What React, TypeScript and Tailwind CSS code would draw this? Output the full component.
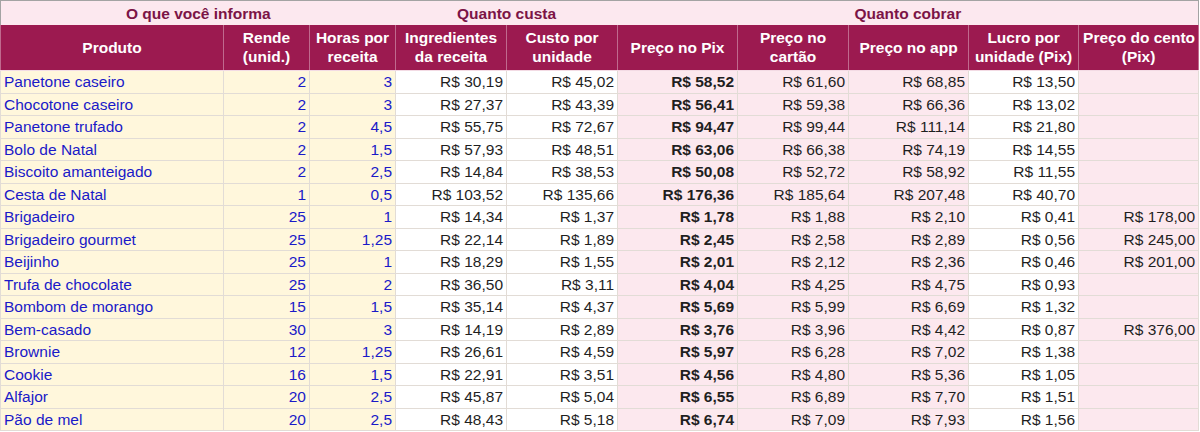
const rows: [string, string, string, string, string, string, string, string, string, string][] = [
  ["Panetone caseiro", "2", "3", "30,19", "45,02", "58,52", "61,60", "68,85", "13,50", ""],
  ["Chocotone caseiro", "2", "3", "27,37", "43,39", "56,41", "59,38", "66,36", "13,02", ""],
  ["Panetone trufado", "2", "4,5", "55,75", "72,67", "94,47", "99,44", "111,14", "21,80", ""],
  ["Bolo de Natal", "2", "1,5", "57,93", "48,51", "63,06", "66,38", "74,19", "14,55", ""],
  ["Biscoito amanteigado", "2", "2,5", "14,84", "38,53", "50,08", "52,72", "58,92", "11,55", ""],
  ["Cesta de Natal", "1", "0,5", "103,52", "135,66", "176,36", "185,64", "207,48", "40,70", ""],
  ["Brigadeiro", "25", "1", "14,34", "1,37", "1,78", "1,88", "2,10", "0,41", "178,00"],
  ["Brigadeiro gourmet", "25", "1,25", "22,14", "1,89", "2,45", "2,58", "2,89", "0,56", "245,00"],
  ["Beijinho", "25", "1", "18,29", "1,55", "2,01", "2,12", "2,36", "0,46", "201,00"],
  ["Trufa de chocolate", "25", "2", "36,50", "3,11", "4,04", "4,25", "4,75", "0,93", ""],
  ["Bombom de morango", "15", "1,5", "35,14", "4,37", "5,69", "5,99", "6,69", "1,32", ""],
  ["Bem-casado", "30", "3", "14,19", "2,89", "3,76", "3,96", "4,42", "0,87", "376,00"],
  ["Brownie", "12", "1,25", "26,61", "4,59", "5,97", "6,28", "7,02", "1,38", ""],
  ["Cookie", "16", "1,5", "22,91", "3,51", "4,56", "4,80", "5,36", "1,05", ""],
  ["Alfajor", "20", "2,5", "45,87", "5,04", "6,55", "6,89", "7,70", "1,51", ""],
  ["Pão de mel", "20", "2,5", "48,43", "5,18", "6,74", "7,09", "7,93", "1,56", ""],
]

const widths = [223, 86, 86, 111, 111, 120, 111, 120, 110, 120]

const headers = [
  ["Produto"],
  ["Rende", "(unid.)"],
  ["Horas por", "receita"],
  ["Ingredientes", "da receita"],
  ["Custo por", "unidade"],
  ["Preço no Pix"],
  ["Preço no", "cartão"],
  ["Preço no app"],
  ["Lucro por", "unidade (Pix)"],
  ["Preço do cento", "(Pix)"],
]

// background per column: input cols yellow, cost cols white, price cols pink
const cellBg = [
  "bg-[#fff7dc]",
  "bg-[#fff7dc]",
  "bg-[#fff7dc]",
  "bg-white",
  "bg-white",
  "bg-[#fce8ee]",
  "bg-[#fce8ee]",
  "bg-[#fce8ee]",
  "bg-white",
  "bg-[#fce8ee]",
]

export default function App() {
  return (
    <div className="w-[1200px] h-[432px] bg-white font-['Liberation_Sans',Arial,sans-serif] text-[15.5px]">
      <table className="table-fixed border-collapse w-[1199px] border border-[#a3a3a3]">
        <colgroup>
          {widths.map((w, i) => (
            <col key={i} style={{ width: w }} />
          ))}
        </colgroup>
        <thead>
          <tr className="h-[24px] bg-[#fce8ef] text-[#7b1446] font-bold">
            <th colSpan={3} className="text-center leading-none pt-px">
              O que você informa
            </th>
            <th colSpan={2} className="text-center leading-none pt-px">
              Quanto custa
            </th>
            <th colSpan={5} className="text-center leading-none pt-px">
              Quanto cobrar
            </th>
          </tr>
          <tr className="h-[46px] bg-[#9c1a50] text-white font-bold">
            {headers.map((lines, i) => (
              <th
                key={i}
                className="text-center leading-[19px] px-1 border-x border-[#c06a8e] border-b border-b-[#f3dbe4]"
              >
                {lines.map((l, j) => (
                  <div key={j} className="whitespace-nowrap">
                    {l}
                  </div>
                ))}
              </th>
            ))}
          </tr>
        </thead>
        <tbody>
          {rows.map((r, ri) => (
            <tr key={ri} className="h-[22.5px]">
              {r.map((v, ci) => {
                const base = `${cellBg[ci]} border border-[#e2dcd6] leading-none px-[3px] whitespace-nowrap`
                if (ci === 0)
                  return (
                    <td key={ci} className={`${base} text-left text-[#1a1ac8]`}>
                      {v}
                    </td>
                  )
                if (ci < 3)
                  return (
                    <td key={ci} className={`${base} text-right text-[#1a1ac8]`}>
                      {v}
                    </td>
                  )
                return (
                  <td
                    key={ci}
                    className={`${base} text-right text-[#1f1f1f] ${ci === 5 ? "font-bold" : ""}`}
                  >
                    {v ? `R$ ${v}` : ""}
                  </td>
                )
              })}
            </tr>
          ))}
        </tbody>
      </table>
    </div>
  )
}
